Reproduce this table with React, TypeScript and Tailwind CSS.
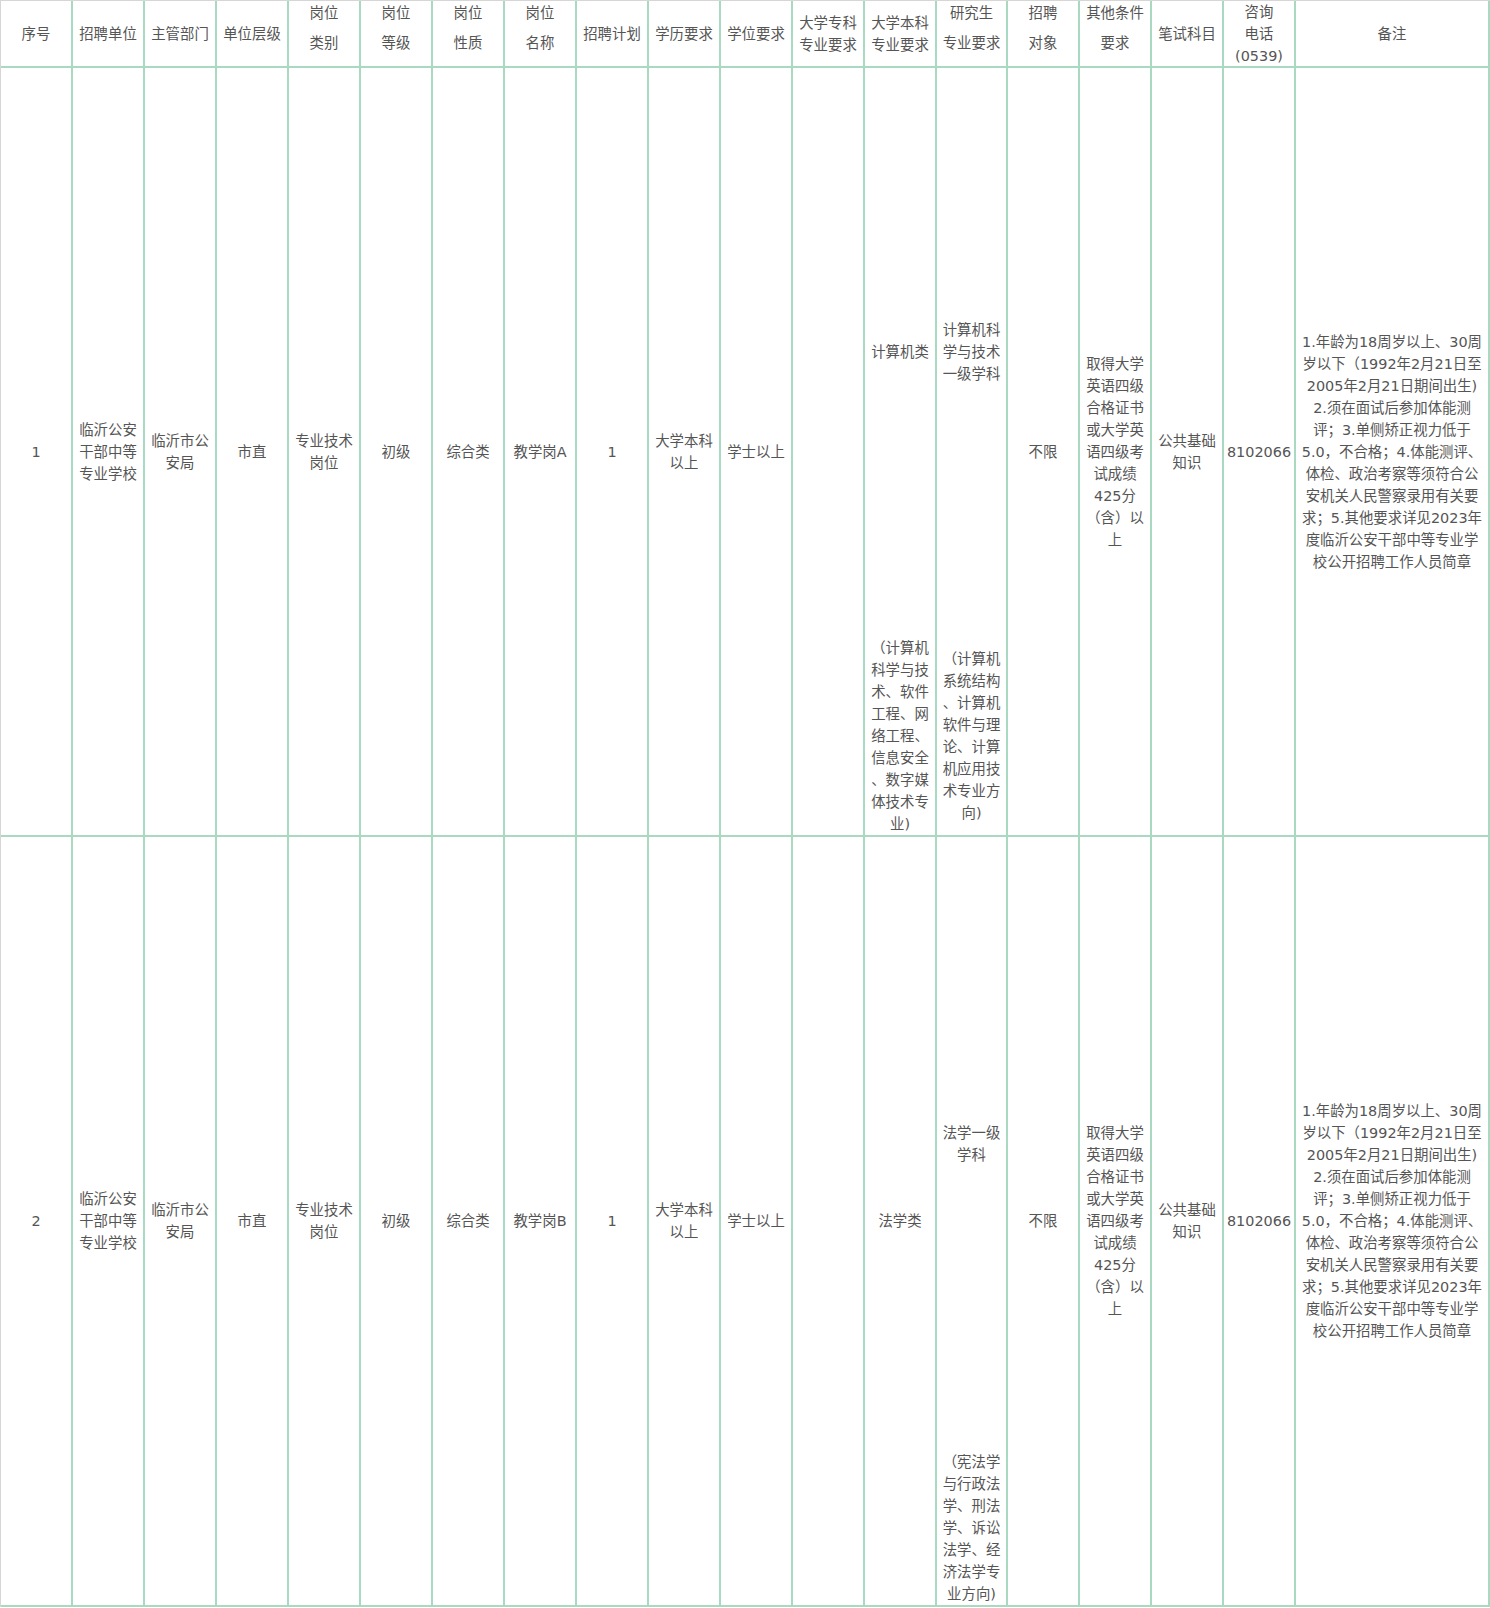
import type { ReactNode } from "react"

// 临沂公安干部中等专业学校 招聘岗位表

type CellProps = {
  children?: ReactNode
  className?: string
}

function Cell({ children, className = "" }: CellProps) {
  return (
    <div
      className={`flex items-center justify-center text-center border-r-2 border-[#a9d9c0] px-[4px] whitespace-nowrap ${className}`}
    >
      {children}
    </div>
  )
}

function Lines({ lines }: { lines: string[] }) {
  return (
    <div className="flex flex-col items-center">
      {lines.map((l, i) => (
        <span key={i}>{l}</span>
      ))}
    </div>
  )
}

// header with the two lines set apart (岗位 / 类别 ...)
function SpacedHead({ top, bottom }: { top: string; bottom: string }) {
  return (
    <Cell className="border-b-2 !items-start pt-[1px]">
      <div className="flex flex-col items-center gap-[8px]">
        <span>{top}</span>
        <span>{bottom}</span>
      </div>
    </Cell>
  )
}

const remarks = [
  "1.年龄为18周岁以上、30周",
  "岁以下（1992年2月21日至",
  "2005年2月21日期间出生)",
  "2.须在面试后参加体能测",
  "评；3.单侧矫正视力低于",
  "5.0，不合格；4.体能测评、",
  "体检、政治考察等须符合公",
  "安机关人民警察录用有关要",
  "求；5.其他要求详见2023年",
  "度临沂公安干部中等专业学",
  "校公开招聘工作人员简章",
]

const otherReq = [
  "取得大学",
  "英语四级",
  "合格证书",
  "或大学英",
  "语四级考",
  "试成绩",
  "425分",
  "（含）以",
  "上",
]

function LeadCells({ no, post }: { no: string; post: string }) {
  return (
    <>
      <Cell className="row-span-2 border-b-2">{no}</Cell>
      <Cell className="row-span-2 border-b-2">
        <Lines lines={["临沂公安", "干部中等", "专业学校"]} />
      </Cell>
      <Cell className="row-span-2 border-b-2">
        <Lines lines={["临沂市公", "安局"]} />
      </Cell>
      <Cell className="row-span-2 border-b-2">市直</Cell>
      <Cell className="row-span-2 border-b-2">
        <Lines lines={["专业技术", "岗位"]} />
      </Cell>
      <Cell className="row-span-2 border-b-2">初级</Cell>
      <Cell className="row-span-2 border-b-2">综合类</Cell>
      <Cell className="row-span-2 border-b-2">{post}</Cell>
      <Cell className="row-span-2 border-b-2">1</Cell>
      <Cell className="row-span-2 border-b-2">
        <Lines lines={["大学本科", "以上"]} />
      </Cell>
      <Cell className="row-span-2 border-b-2">学士以上</Cell>
      <Cell className="row-span-2 border-b-2" />
    </>
  )
}

function TailCells() {
  return (
    <>
      <Cell className="row-span-2 border-b-2">不限</Cell>
      <Cell className="row-span-2 border-b-2">
        <Lines lines={otherReq} />
      </Cell>
      <Cell className="row-span-2 border-b-2">
        <Lines lines={["公共基础", "知识"]} />
      </Cell>
      <Cell className="row-span-2 border-b-2">8102066</Cell>
      <Cell className="row-span-2 border-b-2">
        <Lines lines={remarks} />
      </Cell>
    </>
  )
}

export default function App() {
  return (
    <div className="w-[1490px] min-h-[1608px] bg-white font-['DejaVu_Sans','Noto_Sans_CJK_SC',sans-serif] text-[14.4px] leading-[22px] text-[#555555]">
      <div className="grid grid-cols-[repeat(13,72px)_71px_repeat(4,72px)_194px] grid-rows-[67px_568px_201px_614px_156px] border-l border-t border-[#d6d6d6] w-fit">
        {/* header */}
        <Cell className="border-b-2">序号</Cell>
        <Cell className="border-b-2">招聘单位</Cell>
        <Cell className="border-b-2">主管部门</Cell>
        <Cell className="border-b-2">单位层级</Cell>
        <SpacedHead top="岗位" bottom="类别" />
        <SpacedHead top="岗位" bottom="等级" />
        <SpacedHead top="岗位" bottom="性质" />
        <SpacedHead top="岗位" bottom="名称" />
        <Cell className="border-b-2">招聘计划</Cell>
        <Cell className="border-b-2">学历要求</Cell>
        <Cell className="border-b-2">学位要求</Cell>
        <Cell className="border-b-2">
          <Lines lines={["大学专科", "专业要求"]} />
        </Cell>
        <Cell className="border-b-2">
          <Lines lines={["大学本科", "专业要求"]} />
        </Cell>
        <SpacedHead top="研究生" bottom="专业要求" />
        <SpacedHead top="招聘" bottom="对象" />
        <SpacedHead top="其他条件" bottom="要求" />
        <Cell className="border-b-2">笔试科目</Cell>
        <Cell className="border-b-2">
          <Lines lines={["咨询", "电话", "(0539)"]} />
        </Cell>
        <Cell className="border-b-2">备注</Cell>

        {/* row 1 */}
        <LeadCells no="1" post="教学岗A" />
        <Cell>计算机类</Cell>
        <Cell>
          <Lines lines={["计算机科", "学与技术", "一级学科"]} />
        </Cell>
        <TailCells />
        <Cell className="border-b-2">
          <Lines
            lines={["（计算机", "科学与技", "术、软件", "工程、网", "络工程、", "信息安全", "、数字媒", "体技术专", "业)"]}
          />
        </Cell>
        <Cell className="border-b-2">
          <Lines
            lines={["（计算机", "系统结构", "、计算机", "软件与理", "论、计算", "机应用技", "术专业方", "向)"]}
          />
        </Cell>

        {/* row 2 */}
        <LeadCells no="2" post="教学岗B" />
        <Cell className="row-span-2 border-b-2">法学类</Cell>
        <Cell>
          <Lines lines={["法学一级", "学科"]} />
        </Cell>
        <TailCells />
        <Cell className="border-b-2">
          <Lines lines={["（宪法学", "与行政法", "学、刑法", "学、诉讼", "法学、经", "济法学专", "业方向)"]} />
        </Cell>
      </div>
    </div>
  )
}
